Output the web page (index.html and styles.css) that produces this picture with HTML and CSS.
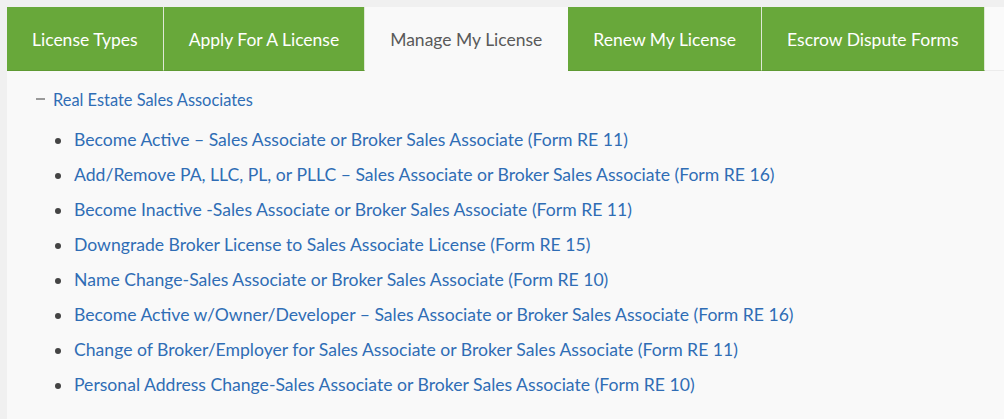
FILE: index.html
```html
<!DOCTYPE html>
<html>
<head>
<meta charset="utf-8">
<link rel="stylesheet" href="styles.css">
</head>
<body>
<div class="page">
  <nav class="tabs">
    <a class="tab">License Types</a>
    <a class="tab">Apply For A License</a>
    <a class="tab active">Manage My License</a>
    <a class="tab">Renew My License</a>
    <a class="tab">Escrow Dispute Forms</a>
  </nav>
  <div class="panel">
    <div class="group-head"><span class="toggle"></span><a class="group-title">Real Estate Sales Associates</a></div>
    <ul class="links">
      <li><a>Become Active – Sales Associate or Broker Sales Associate (Form RE 11)</a></li>
      <li><a>Add/Remove PA, LLC, PL, or PLLC – Sales Associate or Broker Sales Associate (Form RE 16)</a></li>
      <li><a>Become Inactive -Sales Associate or Broker Sales Associate (Form RE 11)</a></li>
      <li><a>Downgrade Broker License to Sales Associate License (Form RE 15)</a></li>
      <li><a>Name Change-Sales Associate or Broker Sales Associate (Form RE 10)</a></li>
      <li><a>Become Active w/Owner/Developer – Sales Associate or Broker Sales Associate (Form RE 16)</a></li>
      <li><a>Change of Broker/Employer for Sales Associate or Broker Sales Associate (Form RE 11)</a></li>
      <li><a>Personal Address Change-Sales Associate or Broker Sales Associate (Form RE 10)</a></li>
    </ul>
  </div>
</div>
</body>
</html>
```
FILE: styles.css
```css
html, body {
  margin: 0;
  padding: 0;
  height: 100%;
}
body {
  background: #f0f0f0;
  font-family: Lato, "Open Sans", sans-serif;
}
.page {
  margin-left: 7px;
  padding-top: 7px;
  height: calc(100% - 7px);
  display: flex;
  flex-direction: column;
}
.tabs {
  display: flex;
  height: 64px;
  background: #fafafa;
  border-bottom: 1px solid #ececec;
  box-sizing: border-box;
}
.tab {
  display: flex;
  align-items: center;
  padding: 1px 25px 0;
  background: #68a83a;
  color: #ffffff;
  font-size: 17.5px;
  border-right: 1px solid #dfe8d6;
  border-bottom: 1px solid #5e9a33;
  margin-bottom: -1px;
  white-space: nowrap;
}
.tab.active {
  background: #f9f9f9;
  color: #5a5a5a;
  border-right-color: #f9f9f9;
  border-bottom-color: #f9f9f9;
}
.panel {
  flex: 1;
  background: #f9f9f9;
  padding: 18px 0 0 29px;
}
.group-head {
  display: flex;
  align-items: center;
  height: 20px;
}
.toggle {
  width: 9px;
  height: 2px;
  background: #9a9a9a;
  margin-right: 8px;
}
.group-title {
  color: #2f6db5;
  font-size: 16.4px;
}
.links {
  margin: 13px 0 0;
  padding: 0 0 0 38px;
  list-style: none;
}
.links li {
  position: relative;
  height: 35px;
  display: flex;
  align-items: center;
  font-size: 17.6px;
  color: #2f6db5;
}
.links li::before {
  content: "";
  position: absolute;
  left: -19px;
  top: 50%;
  width: 6px;
  height: 6px;
  margin-top: -2px;
  border-radius: 50%;
  background: #444;
}
```
